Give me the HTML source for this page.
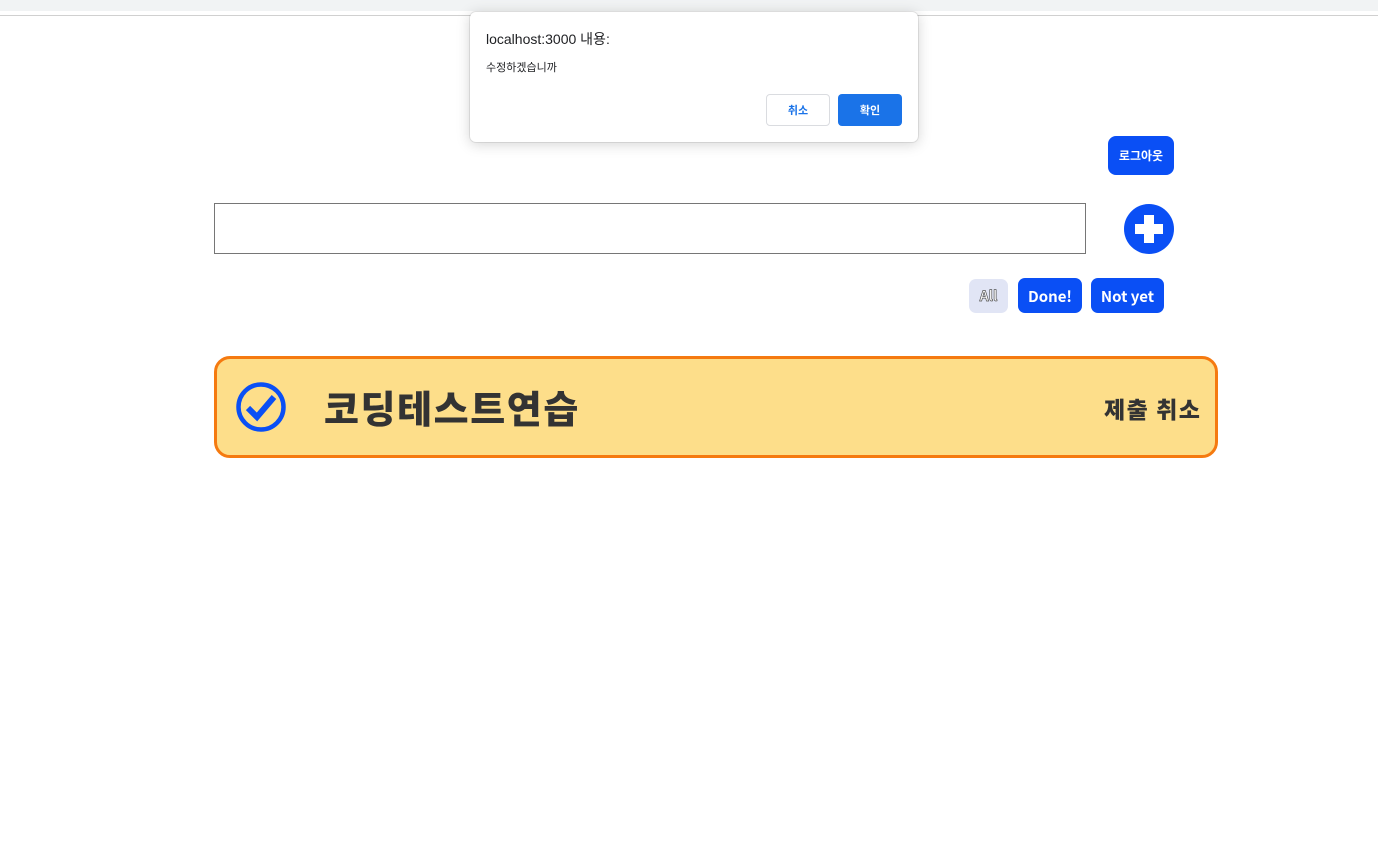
<!DOCTYPE html>
<html><head><meta charset="utf-8"><style>
*{margin:0;padding:0;box-sizing:border-box}
body{width:1378px;height:848px;background:#fff;position:relative;overflow:hidden;font-family:"Liberation Sans","Noto Sans CJK KR",sans-serif}
.top{position:absolute;left:0;top:0;width:1378px;height:11px;background:#f1f3f4}
.line{position:absolute;left:0;top:15px;width:1378px;height:1px;background:#d0d0d0}
.abs{position:absolute}
.btn{position:absolute;background:#0a4ff5;color:#fff;font-weight:bold;border-radius:7px;display:flex;align-items:center;justify-content:center;font-family:"Noto Sans CJK KR",sans-serif}
</style></head><body>
<div class="top"></div><div class="line"></div>

<div class="btn" style="left:1108px;top:136px;width:66px;height:39px;font-size:12px;border-radius:8px">로그아웃</div>
<div class="abs" style="left:214px;top:203px;width:872px;height:51px;border:1px solid #767676"></div>
<svg class="abs" style="left:1124px;top:204px" width="50" height="50" viewBox="0 0 50 50"><circle cx="25" cy="25" r="25" fill="#0a4ff5"/><rect x="20" y="11" width="10" height="28" fill="#fff"/><rect x="11" y="20" width="28" height="10" fill="#fff"/></svg>

<div class="abs" style="left:969px;top:279px;width:39px;height:34px;background:#e1e5f5;border-radius:7px;display:flex;align-items:center;justify-content:center;font-size:14px;color:#fff;-webkit-text-stroke:0.7px #555;font-weight:bold;font-family:'Noto Sans CJK KR',sans-serif">All</div>
<div class="btn" style="left:1018px;top:278px;width:64px;height:35px;font-size:15px;padding-top:2px">Done!</div>
<div class="btn" style="left:1091px;top:278px;width:73px;height:35px;font-size:15px;padding-top:2px">Not yet</div>

<div class="abs" style="left:214px;top:356px;width:1004px;height:102px;background:#fdde8a;border:3px solid #f57a10;border-radius:16px"></div>
<svg class="abs" style="left:236px;top:382px" width="50" height="50" viewBox="0 0 50 50"><circle cx="25" cy="25" r="22.5" fill="none" stroke="#0a4ff5" stroke-width="4.5"/><path d="M12 26 L21 35 L38 15" fill="none" stroke="#0a4ff5" stroke-width="6" stroke-linejoin="miter"/></svg>
<div class="abs" style="left:324px;top:382px;font-size:38px;letter-spacing:1.6px;font-weight:900;color:#333;line-height:50px;font-family:'Noto Sans CJK KR',sans-serif">코딩테스트연습</div>
<div class="abs" style="left:1104px;top:392px;font-size:23px;letter-spacing:1.5px;font-weight:900;color:#333;line-height:32px;font-family:'Noto Sans CJK KR',sans-serif">제출 취소</div>

<div class="abs" style="left:470px;top:12px;width:448px;height:130px;background:#fff;border-radius:6px;box-shadow:0 2px 14px rgba(0,0,0,0.18),0 0 0 1px rgba(0,0,0,0.08)"></div>
<div class="abs" style="left:486px;top:30px;font-size:14px;color:#202124;line-height:18px">localhost:3000 내용:</div>
<div class="abs" style="left:486px;top:61px;font-size:11px;color:#202124;line-height:15px">수정하겠습니까</div>
<div class="abs" style="left:766px;top:94px;width:64px;height:32px;border:1px solid #dadce0;border-radius:4px;display:flex;align-items:center;justify-content:center;font-size:11px;color:#1a73e8;font-weight:bold">취소</div>
<div class="abs" style="left:838px;top:94px;width:64px;height:32px;background:#1a73e8;border-radius:4px;display:flex;align-items:center;justify-content:center;font-size:11px;color:#fff;font-weight:bold">확인</div>
</body></html>
